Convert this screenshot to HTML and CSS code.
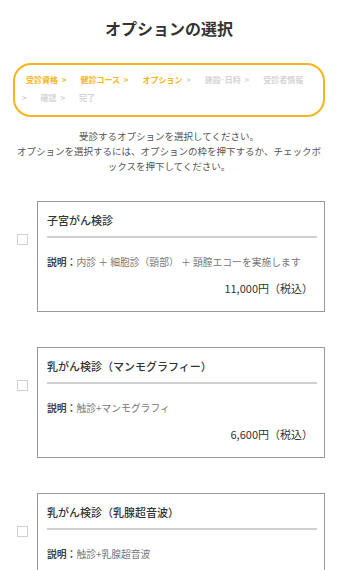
FILE: index.html
```html
<!DOCTYPE html>
<html lang="ja">

<head>
    <meta charset="utf-8" />
    <meta name="viewport" content="width=device-width, initial-scale=1" />
    <title>オプションの選択</title>
    <link rel="stylesheet" href="styles.css">
</head>

<body>
    <h1 class="page-title">オプションの選択</h1>

    <ol class="steps">
        <li class="step done"><span class="step-name">受診資格</span> <span class="sep">&gt;</span></li>
        <li class="step done"><span class="step-name">健診コース</span> <span class="sep">&gt;</span></li>
        <li class="step current"><span class="step-name">オプション</span> <span class="sep">&gt;</span></li>
        <li class="step"><span class="step-name">施設･日時</span> <span class="sep">&gt;</span></li>
        <li class="step"><span class="step-name">受診者情報</span> <span class="sep">&gt;</span></li>
        <li class="step"><span class="step-name">確認</span> <span class="sep">&gt;</span></li>
        <li class="step"><span class="step-name">完了</span></li>
    </ol>

    <p class="lead">受診するオプションを選択してください。<br />オプションを選択するには、オプションの枠を押下するか、チェックボ<br />ックスを押下してください。</p>

    <ul class="options">
        <li class="option">
            <span class="check"></span>
            <div class="card">
                <h2 class="card-title">子宮がん検診</h2>
                <p class="card-desc"><strong>説明：</strong>内診 ＋ 細胞診（頸部） ＋ 頸膣エコーを実施します</p>
                <p class="card-price">11,000円（税込）</p>
            </div>
        </li>
        <li class="option">
            <span class="check"></span>
            <div class="card">
                <h2 class="card-title">乳がん検診（マンモグラフィー）</h2>
                <p class="card-desc"><strong>説明：</strong>触診+マンモグラフィ</p>
                <p class="card-price">6,600円（税込）</p>
            </div>
        </li>
        <li class="option">
            <span class="check"></span>
            <div class="card">
                <h2 class="card-title">乳がん検診（乳腺超音波）</h2>
                <p class="card-desc"><strong>説明：</strong>触診+乳腺超音波</p>
                <p class="card-price">6,600円（税込）</p>
            </div>
        </li>
    </ul>
</body>

</html>
```

FILE: styles.css
```css
body {
    margin: 0;
    padding: 16px 0 40px;
    font-family: "Noto Sans CJK JP", "Noto Sans", sans-serif;
    color: #333;
    background: #fff;
}

.page-title {
    margin: 0;
    font-size: 16px;
    line-height: 24px;
    font-weight: 700;
    text-align: center;
    color: #333;
}

.steps {
    list-style: none;
    margin: 23px 13px 0;
    padding: 6px 16px 8px 5px;
    border: 2px solid #f6b51c;
    border-radius: 18px;
    font-size: 8px;
    line-height: 18px;
    font-weight: 700;
    color: #d4d4d4;
}

.step {
    display: inline;
    padding-left: 6px;
}

.step-name {
    white-space: nowrap;
}

.sep {
    margin-left: 2px;
    margin-right: 6px;
}

.step.done,
.step.current .step-name {
    color: #f6b51c;
}

.lead {
    margin: 12px 0 0;
    padding: 0 11px;
    font-size: 9.5px;
    line-height: 15px;
    text-align: center;
    color: #555;
}

.options {
    list-style: none;
    margin: 27px 13px 0 17px;
    padding: 0;
}

.option {
    display: flex;
    align-items: flex-start;
    gap: 9px;
    margin-bottom: 35px;
}

.check {
    flex: none;
    width: 9px;
    height: 9px;
    margin-top: 33px;
    border: 1px solid #d0d0d0;
    background: #fff;
}

.card {
    flex: 1;
    border: 1px solid #999;
    padding: 10px 7px 16px 9px;
}

.card-title {
    margin: 0;
    padding-bottom: 8px;
    border-bottom: 2px solid #d0d0d0;
    font-size: 11px;
    line-height: 16px;
    font-weight: 500;
    color: #333;
}

.card-desc {
    margin: 17px 0 0;
    font-size: 9.8px;
    line-height: 14px;
    color: #777;
}

.card-desc strong {
    color: #444;
    font-weight: 700;
}

.card-price {
    margin: 12px 0 0;
    padding-right: 4px;
    font-size: 11px;
    line-height: 14px;
    text-align: right;
    color: #333;
}
```
